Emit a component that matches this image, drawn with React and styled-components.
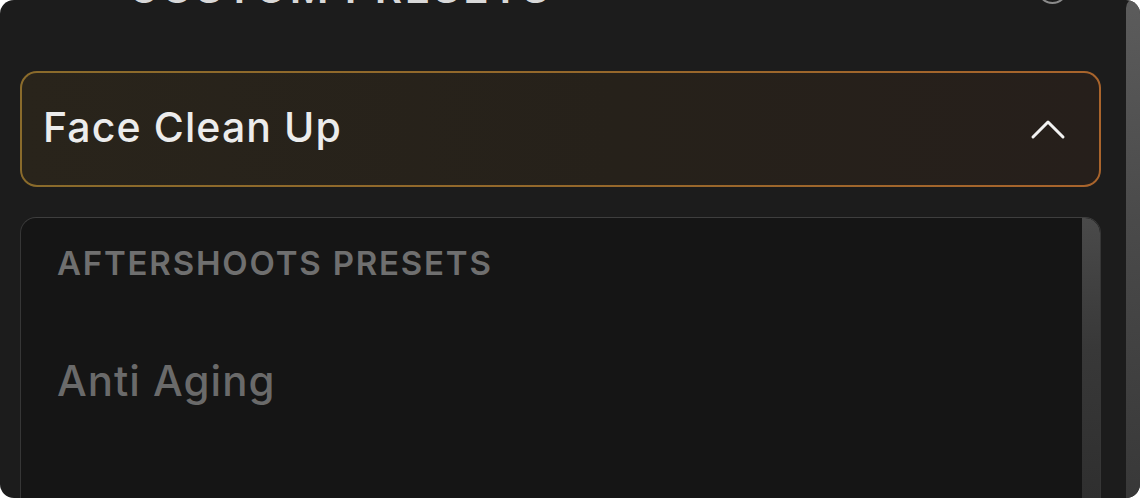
import React from "react";
import styled, { createGlobalStyle } from "styled-components";

const Global = createGlobalStyle`
  html, body { margin: 0; padding: 0; background: #ffffff; }
  body { font-family: Inter, "Noto Sans", sans-serif; }
`;

const Frame = styled.div`
  width: 1140px;
  height: 498px;
  border-radius: 14px;
  background: #1c1c1c;
  overflow: hidden;
  display: flex;
`;

const Main = styled.div`
  flex: 1;
  display: flex;
  flex-direction: column;
  padding: 0 25px 0 20px;
  min-width: 0;
`;

const Header = styled.div`
  margin-top: -32px;
  height: 40px;
  display: flex;
  align-items: center;
  justify-content: space-between;
  padding: 0 33px 0 108px;
`;

const HeaderTitle = styled.div`
  font-size: 42px;
  line-height: 1;
  font-weight: 600;
  letter-spacing: 2.8px;
  color: #d8d8d8;
`;

const HelpCircle = styled.div`
  width: 27px;
  height: 27px;
  border-radius: 50%;
  border: 2px solid #8a8a8a;
`;

const SelectBorder = styled.div`
  margin-top: 63px;
  padding: 2px;
  border-radius: 17px;
  background: linear-gradient(90deg, #8a6b2b 0%, #94682b 50%, #a9642c 100%);
`;

const SelectInner = styled.div`
  height: 112px;
  border-radius: 15px;
  background: linear-gradient(90deg, #29241b 0%, #26211a 55%, #261f1b 100%);
  display: flex;
  align-items: center;
  justify-content: space-between;
  padding: 0 33px 0 21px;
`;

const SelectText = styled.div`
  font-size: 41px;
  line-height: 1;
  font-weight: 500;
  letter-spacing: 1.1px;
  color: #ececec;
  margin-top: -4px;
`;

const ListBox = styled.div`
  margin-top: 30px;
  height: 330px;
  flex-shrink: 0;
  border: 1px solid #363636;
  border-top-color: #3e3e3e;
  border-radius: 16px;
  background: #151515;
  display: flex;
  overflow: hidden;
`;

const ListContent = styled.div`
  flex: 1;
  padding: 29px 0 0 36px;
  display: flex;
  flex-direction: column;
`;

const GroupLabel = styled.div`
  font-size: 33px;
  line-height: 1;
  font-weight: 600;
  color: #6f6f6f;
  letter-spacing: 1.8px;
`;

const Option = styled.div`
  margin-top: 80px;
  font-size: 42px;
  line-height: 1;
  font-weight: 500;
  letter-spacing: 1px;
  color: #6a6a6a;
`;

const InnerThumb = styled.div`
  width: 18px;
  border-top-right-radius: 15px;
  background: linear-gradient(180deg, #4a4a4a 0%, #383838 40%, #2c2c2c 100%);
`;

const OuterThumb = styled.div`
  width: 14px;
  margin-top: -2px;
  border-top-left-radius: 10px;
  background: linear-gradient(180deg, #5c5c5c 0%, #4a4a4a 45%, #383838 100%);
`;

const Chevron = () => (
  <svg width="36" height="22" viewBox="0 0 36 22" fill="none">
    <polyline
      points="3,19 18,4 33,19"
      stroke="#f2f2f2"
      strokeWidth="3"
      strokeLinecap="round"
      strokeLinejoin="round"
    />
  </svg>
);

export default function App() {
  return (
    <>
      <Global />
      <Frame>
        <Main>
          <Header>
            <HeaderTitle>CUSTOM PRESETS</HeaderTitle>
            <HelpCircle />
          </Header>
          <SelectBorder>
            <SelectInner>
              <SelectText>Face Clean Up</SelectText>
              <Chevron />
            </SelectInner>
          </SelectBorder>
          <ListBox>
            <ListContent>
              <GroupLabel>AFTERSHOOTS PRESETS</GroupLabel>
              <Option>Anti Aging</Option>
            </ListContent>
            <InnerThumb />
          </ListBox>
        </Main>
        <OuterThumb />
      </Frame>
    </>
  );
}
